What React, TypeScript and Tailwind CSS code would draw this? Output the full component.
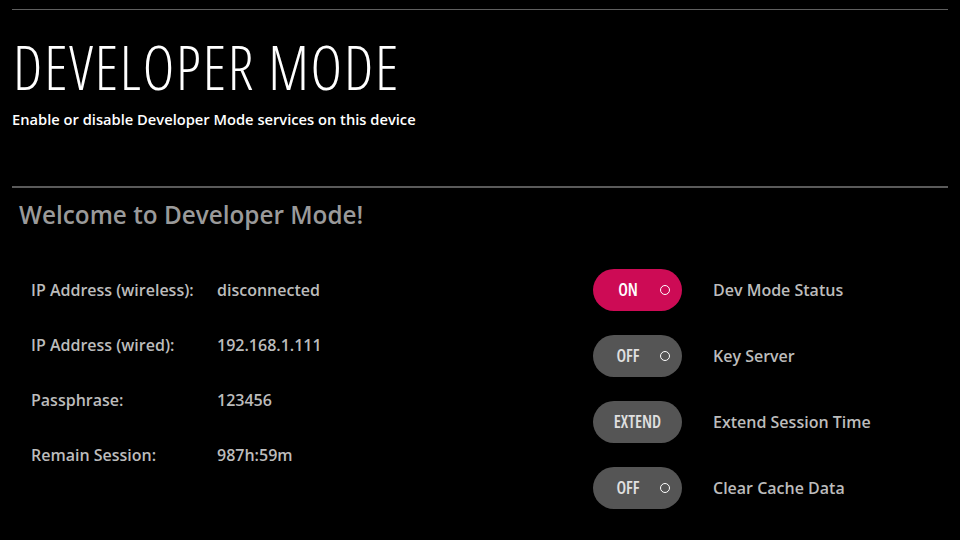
const cond = { fontFamily: "'Open Sans', 'DejaVu Sans', sans-serif", fontStretch: "condensed" } as const;

const info = [
  ["IP Address (wireless):", "disconnected"],
  ["IP Address (wired):", "192.168.1.111"],
  ["Passphrase:", "123456"],
  ["Remain Session:", "987h:59m"],
];

const toggles = [
  { text: "ON", on: true, dot: true, label: "Dev Mode Status" },
  { text: "OFF", on: false, dot: true, label: "Key Server" },
  { text: "EXTEND", on: false, dot: false, label: "Extend Session Time" },
  { text: "OFF", on: false, dot: true, label: "Clear Cache Data" },
];

function Pill({ text, on, dot }: { text: string; on: boolean; dot: boolean }) {
  return (
    <div
      className={`relative w-[89px] h-[42px] rounded-full flex items-center ${on ? "bg-[#cd0b55]" : "bg-[#555555]"}`}
    >
      {dot ? (
        <>
          <span style={cond} className={`w-[70px] text-center text-[17px] font-semibold ${on ? "text-white" : "text-[#e0e0e0]"}`}>
            {text}
          </span>
          <span className="absolute left-[67px] top-[16px] w-[10px] h-[10px] rounded-full border-[1.5px] border-white" />
        </>
      ) : (
        <span style={cond} className="w-full text-center text-[17px] font-semibold text-[#e0e0e0]">
          {text}
        </span>
      )}
    </div>
  );
}

export default function App() {
  return (
    <div className="w-[960px] h-[540px] bg-black px-3 overflow-hidden" style={{ fontFamily: "'Open Sans', Lato, sans-serif" }}>
      <div className="h-px bg-[#5f5f5f] mt-[9px]" />
      <div className="pt-[25px] h-[176px]">
        <h1 style={cond} className="text-white text-[60px] font-light leading-[64px] tracking-[1.8px] pl-[1px]">
          DEVELOPER MODE
        </h1>
        <p className="text-white text-[14.7px] font-semibold leading-5 mt-[10px]">
          Enable or disable Developer Mode services on this device
        </p>
      </div>
      <div className="h-[2px] bg-[#5a5a5a]" />
      <h2 className="text-[#9a9a9a] text-[24.3px] font-semibold leading-7 pl-[7px] mt-[13px]">Welcome to Developer Mode!</h2>
      <div className="flex mt-[40px]">
        <div className="w-[581px] pl-[19px] flex flex-col gap-[35px] pt-[11px]">
          {info.map(([k, v]) => (
            <div key={k} className="flex text-[16px] font-semibold leading-5 text-[#bcbcbc]">
              <span className="w-[186px]">{k}</span>
              <span>{v}</span>
            </div>
          ))}
        </div>
        <div className="flex flex-col gap-[24px]">
          {toggles.map((t) => (
            <div key={t.label} className="flex items-center">
              <Pill text={t.text} on={t.on} dot={t.dot} />
              <span className="ml-[31px] text-[16px] font-semibold text-[#bcbcbc]">{t.label}</span>
            </div>
          ))}
        </div>
      </div>
    </div>
  );
}
